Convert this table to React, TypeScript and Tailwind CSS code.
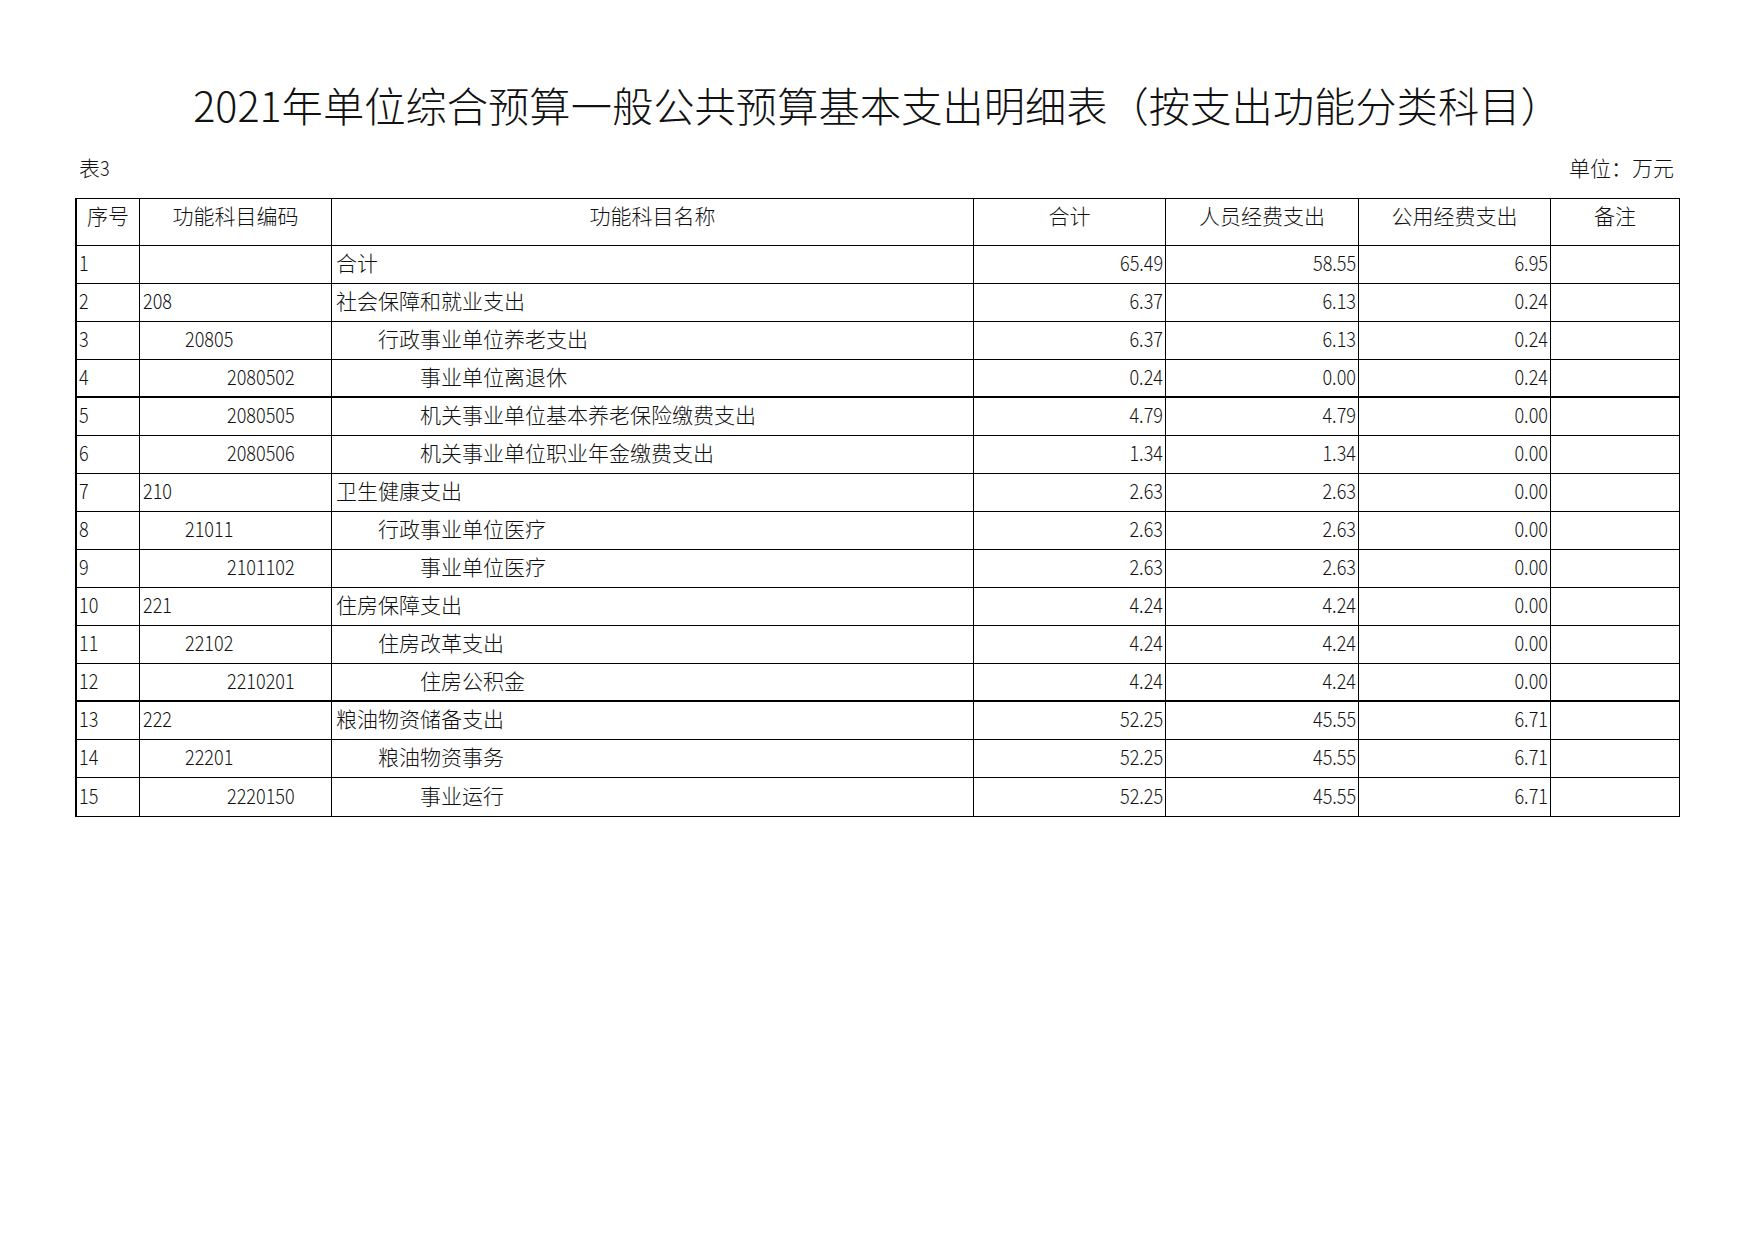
import React from "react";

type Row = {
  seq: string;
  code: string;
  codeLevel: number;
  name: string;
  nameLevel: number;
  total: string;
  staff: string;
  office: string;
  thick?: boolean;
};

const rows: Row[] = [
  { seq: "1", code: "", codeLevel: 1, name: "合计", nameLevel: 1, total: "65.49", staff: "58.55", office: "6.95" },
  { seq: "2", code: "208", codeLevel: 1, name: "社会保障和就业支出", nameLevel: 1, total: "6.37", staff: "6.13", office: "0.24" },
  { seq: "3", code: "20805", codeLevel: 2, name: "行政事业单位养老支出", nameLevel: 2, total: "6.37", staff: "6.13", office: "0.24" },
  { seq: "4", code: "2080502", codeLevel: 3, name: "事业单位离退休", nameLevel: 3, total: "0.24", staff: "0.00", office: "0.24", thick: true },
  { seq: "5", code: "2080505", codeLevel: 3, name: "机关事业单位基本养老保险缴费支出", nameLevel: 3, total: "4.79", staff: "4.79", office: "0.00" },
  { seq: "6", code: "2080506", codeLevel: 3, name: "机关事业单位职业年金缴费支出", nameLevel: 3, total: "1.34", staff: "1.34", office: "0.00" },
  { seq: "7", code: "210", codeLevel: 1, name: "卫生健康支出", nameLevel: 1, total: "2.63", staff: "2.63", office: "0.00" },
  { seq: "8", code: "21011", codeLevel: 2, name: "行政事业单位医疗", nameLevel: 2, total: "2.63", staff: "2.63", office: "0.00" },
  { seq: "9", code: "2101102", codeLevel: 3, name: "事业单位医疗", nameLevel: 3, total: "2.63", staff: "2.63", office: "0.00" },
  { seq: "10", code: "221", codeLevel: 1, name: "住房保障支出", nameLevel: 1, total: "4.24", staff: "4.24", office: "0.00" },
  { seq: "11", code: "22102", codeLevel: 2, name: "住房改革支出", nameLevel: 2, total: "4.24", staff: "4.24", office: "0.00" },
  { seq: "12", code: "2210201", codeLevel: 3, name: "住房公积金", nameLevel: 3, total: "4.24", staff: "4.24", office: "0.00", thick: true },
  { seq: "13", code: "222", codeLevel: 1, name: "粮油物资储备支出", nameLevel: 1, total: "52.25", staff: "45.55", office: "6.71" },
  { seq: "14", code: "22201", codeLevel: 2, name: "粮油物资事务", nameLevel: 2, total: "52.25", staff: "45.55", office: "6.71" },
  { seq: "15", code: "2220150", codeLevel: 3, name: "事业运行", nameLevel: 3, total: "52.25", staff: "45.55", office: "6.71" },
];

const codePad: Record<number, string> = {
  1: "pl-[3px]",
  2: "pl-[45px]",
  3: "pl-[87px]",
};

const namePad: Record<number, string> = {
  1: "pl-[4px]",
  2: "pl-[46px]",
  3: "pl-[88px]",
};

const headers: { label: string; w: string; last?: boolean }[] = [
  { label: "序号", w: "w-[63px]" },
  { label: "功能科目编码", w: "w-[192px]" },
  { label: "功能科目名称", w: "w-[642px]" },
  { label: "合计", w: "w-[192px]" },
  { label: "人员经费支出", w: "w-[193px]" },
  { label: "公用经费支出", w: "w-[192px]" },
  { label: "备注", w: "w-[128px]", last: true },
];

function NumL({ v }: { v: string }) {
  return <span className="inline-block scale-x-[0.86] origin-left">{v}</span>;
}

function NumR({ v }: { v: string }) {
  return <span className="inline-block scale-x-[0.86] origin-right">{v}</span>;
}

export default function App() {
  return (
    <div className="w-[1755px] h-[1240px] bg-white text-[#111] font-['Noto_Sans_CJK_SC',sans-serif] font-light">
      <div className="pt-[76px] text-center text-[41.3px] leading-[56px]">
        2021年单位综合预算一般公共预算基本支出明细表（按支出功能分类科目）
      </div>

      <div className="ml-[75px] w-[1605px] mt-[21px] flex justify-between items-center h-[28px] text-[21px] leading-[28px] pl-[4px] pr-[6px]">
        <span>
          表<NumL v="3" />
        </span>
        <span>单位：万元</span>
      </div>

      <div className="ml-[75px] mt-[17px] w-[1605px] border-t border-r border-b border-l-2 border-black text-[21px] leading-[28px]">
        <div className="flex h-[47px] border-b border-black">
          {headers.map((h) => (
            <div
              key={h.label}
              className={`${h.w} ${h.last ? "" : "border-r border-black"} flex justify-center items-start pt-[2px] shrink-0`}
            >
              {h.label}
            </div>
          ))}
        </div>

        {rows.map((r, i) => {
          const isLast = i === rows.length - 1;
          const rowBorder = isLast ? "" : r.thick ? "border-b-2 border-black" : "border-b border-black";
          return (
            <div key={r.seq} className={`flex h-[38px] ${rowBorder}`}>
              <div className="w-[63px] shrink-0 border-r border-black flex items-center pb-[5px] pl-[2px]">
                <NumL v={r.seq} />
              </div>
              <div className={`w-[192px] shrink-0 border-r border-black flex items-center pb-[5px] ${codePad[r.codeLevel]}`}>
                {r.code ? <NumL v={r.code} /> : null}
              </div>
              <div className={`w-[642px] shrink-0 border-r border-black flex items-center pb-[5px] ${namePad[r.nameLevel]}`}>
                {r.name}
              </div>
              <div className="w-[192px] shrink-0 border-r border-black flex items-center justify-end pb-[5px] pr-[2px]">
                <NumR v={r.total} />
              </div>
              <div className="w-[193px] shrink-0 border-r border-black flex items-center justify-end pb-[5px] pr-[2px]">
                <NumR v={r.staff} />
              </div>
              <div className="w-[192px] shrink-0 border-r border-black flex items-center justify-end pb-[5px] pr-[2px]">
                <NumR v={r.office} />
              </div>
              <div className="w-[128px] shrink-0"></div>
            </div>
          );
        })}
      </div>
    </div>
  );
}
